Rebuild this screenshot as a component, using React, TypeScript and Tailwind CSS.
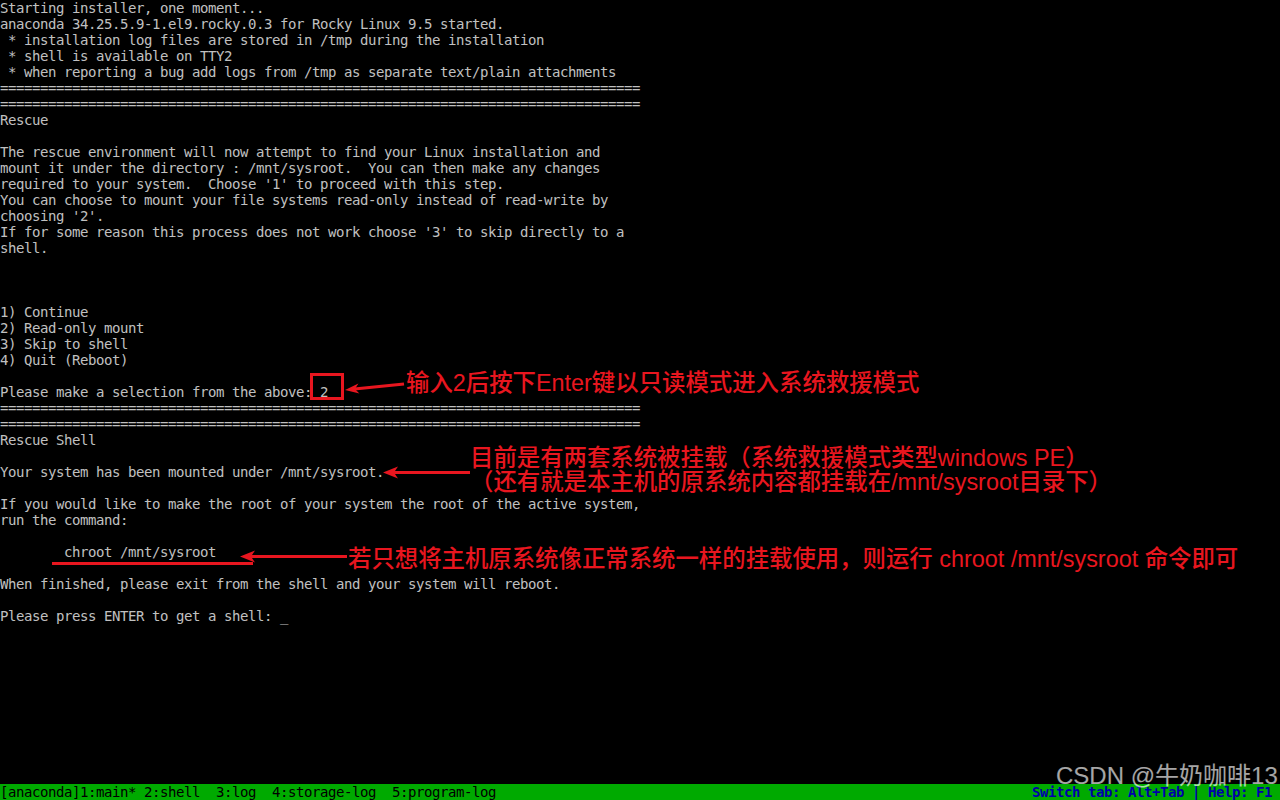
const RULE = '='.repeat(80);

const lines: string[] = [
  'Starting installer, one moment...',
  'anaconda 34.25.5.9-1.el9.rocky.0.3 for Rocky Linux 9.5 started.',
  ' * installation log files are stored in /tmp during the installation',
  ' * shell is available on TTY2',
  ' * when reporting a bug add logs from /tmp as separate text/plain attachments',
  RULE,
  RULE,
  'Rescue',
  '',
  'The rescue environment will now attempt to find your Linux installation and',
  'mount it under the directory : /mnt/sysroot.  You can then make any changes',
  'required to your system.  Choose \'1\' to proceed with this step.',
  'You can choose to mount your file systems read-only instead of read-write by',
  'choosing \'2\'.',
  'If for some reason this process does not work choose \'3\' to skip directly to a',
  'shell.',
  '',
  '',
  '',
  '1) Continue',
  '2) Read-only mount',
  '3) Skip to shell',
  '4) Quit (Reboot)',
  '',
  'Please make a selection from the above: 2',
  RULE,
  RULE,
  'Rescue Shell',
  '',
  'Your system has been mounted under /mnt/sysroot.',
  '',
  'If you would like to make the root of your system the root of the active system,',
  'run the command:',
  '',
  '        chroot /mnt/sysroot',
  '',
  'When finished, please exit from the shell and your system will reboot.',
  '',
  'Please press ENTER to get a shell: _',
];

const RED = '#e8161f';

// red markup drawn on top of the console screenshot
function Markup() {
  return (
    <svg className="absolute inset-0 pointer-events-none" width="1280" height="800" viewBox="0 0 1280 800">
      <rect x="311.5" y="374.5" width="31" height="24" fill="none" stroke={RED} strokeWidth="3" />
      <line x1="404" y1="384" x2="352" y2="389.3" stroke={RED} strokeWidth="3" />
      <polygon points="345,390 359.4,393.6 355,389 358.4,383.6" fill={RED} />

      <line x1="470" y1="472.5" x2="392" y2="472.5" stroke={RED} strokeWidth="3" />
      <polygon points="383,472.5 398,466.5 394,472.5 398,478.5" fill={RED} />

      <rect x="52" y="562" width="201" height="3" fill={RED} />
      <line x1="347" y1="556.5" x2="249" y2="556.5" stroke={RED} strokeWidth="3" />
      <polygon points="240,556.5 255,550.5 251,556.5 255,562.5" fill={RED} />
    </svg>
  );
}

const noteCls =
  "absolute text-[23.4px] leading-6 font-medium text-[#e8161f] whitespace-nowrap font-['Liberation_Sans','Noto_Sans_CJK_SC',sans-serif]";

export default function App() {
  return (
    <div className="relative w-[1280px] h-[800px] bg-black overflow-hidden flex flex-col font-['DejaVu_Sans_Mono','Liberation_Mono',monospace]">
      <div className="flex-1 text-[14px] leading-4 tracking-[-0.43px] text-[#c0c0c0]">
        {lines.map((line, i) => (
          <div key={i} className="h-4 whitespace-pre">{line}</div>
        ))}
      </div>

      <div className="h-4 bg-[#00aa00] flex justify-between text-[14px] leading-4 tracking-[-0.43px] whitespace-pre">
        <span className="text-black">[anaconda]1:main* 2:shell  3:log  4:storage-log  5:program-log</span>
        <span className="text-[#0000aa] font-bold pr-2">Switch tab: Alt+Tab | Help: F1</span>
      </div>

      <Markup />

      <div className={`${noteCls} left-[406px] top-[371px]`}>
        输入2后按下Enter键以只读模式进入系统救援模式
      </div>
      <div className={`${noteCls} left-[470px] top-[446px]`}>
        <div>目前是有两套系统被挂载（系统救援模式类型windows PE）</div>
        <div>（还有就是本主机的原系统内容都挂载在/mnt/sysroot目录下）</div>
      </div>
      <div className={`${noteCls} left-[348px] top-[547px]`}>
        若只想将主机原系统像正常系统一样的挂载使用，则运行 chroot /mnt/sysroot 命令即可
      </div>

      <div className="absolute left-[1056px] top-[762px] text-[24px] leading-7 text-white/65 whitespace-nowrap font-['Liberation_Sans','Noto_Sans_CJK_SC',sans-serif]">
        CSDN @牛奶咖啡13
      </div>
    </div>
  );
}
